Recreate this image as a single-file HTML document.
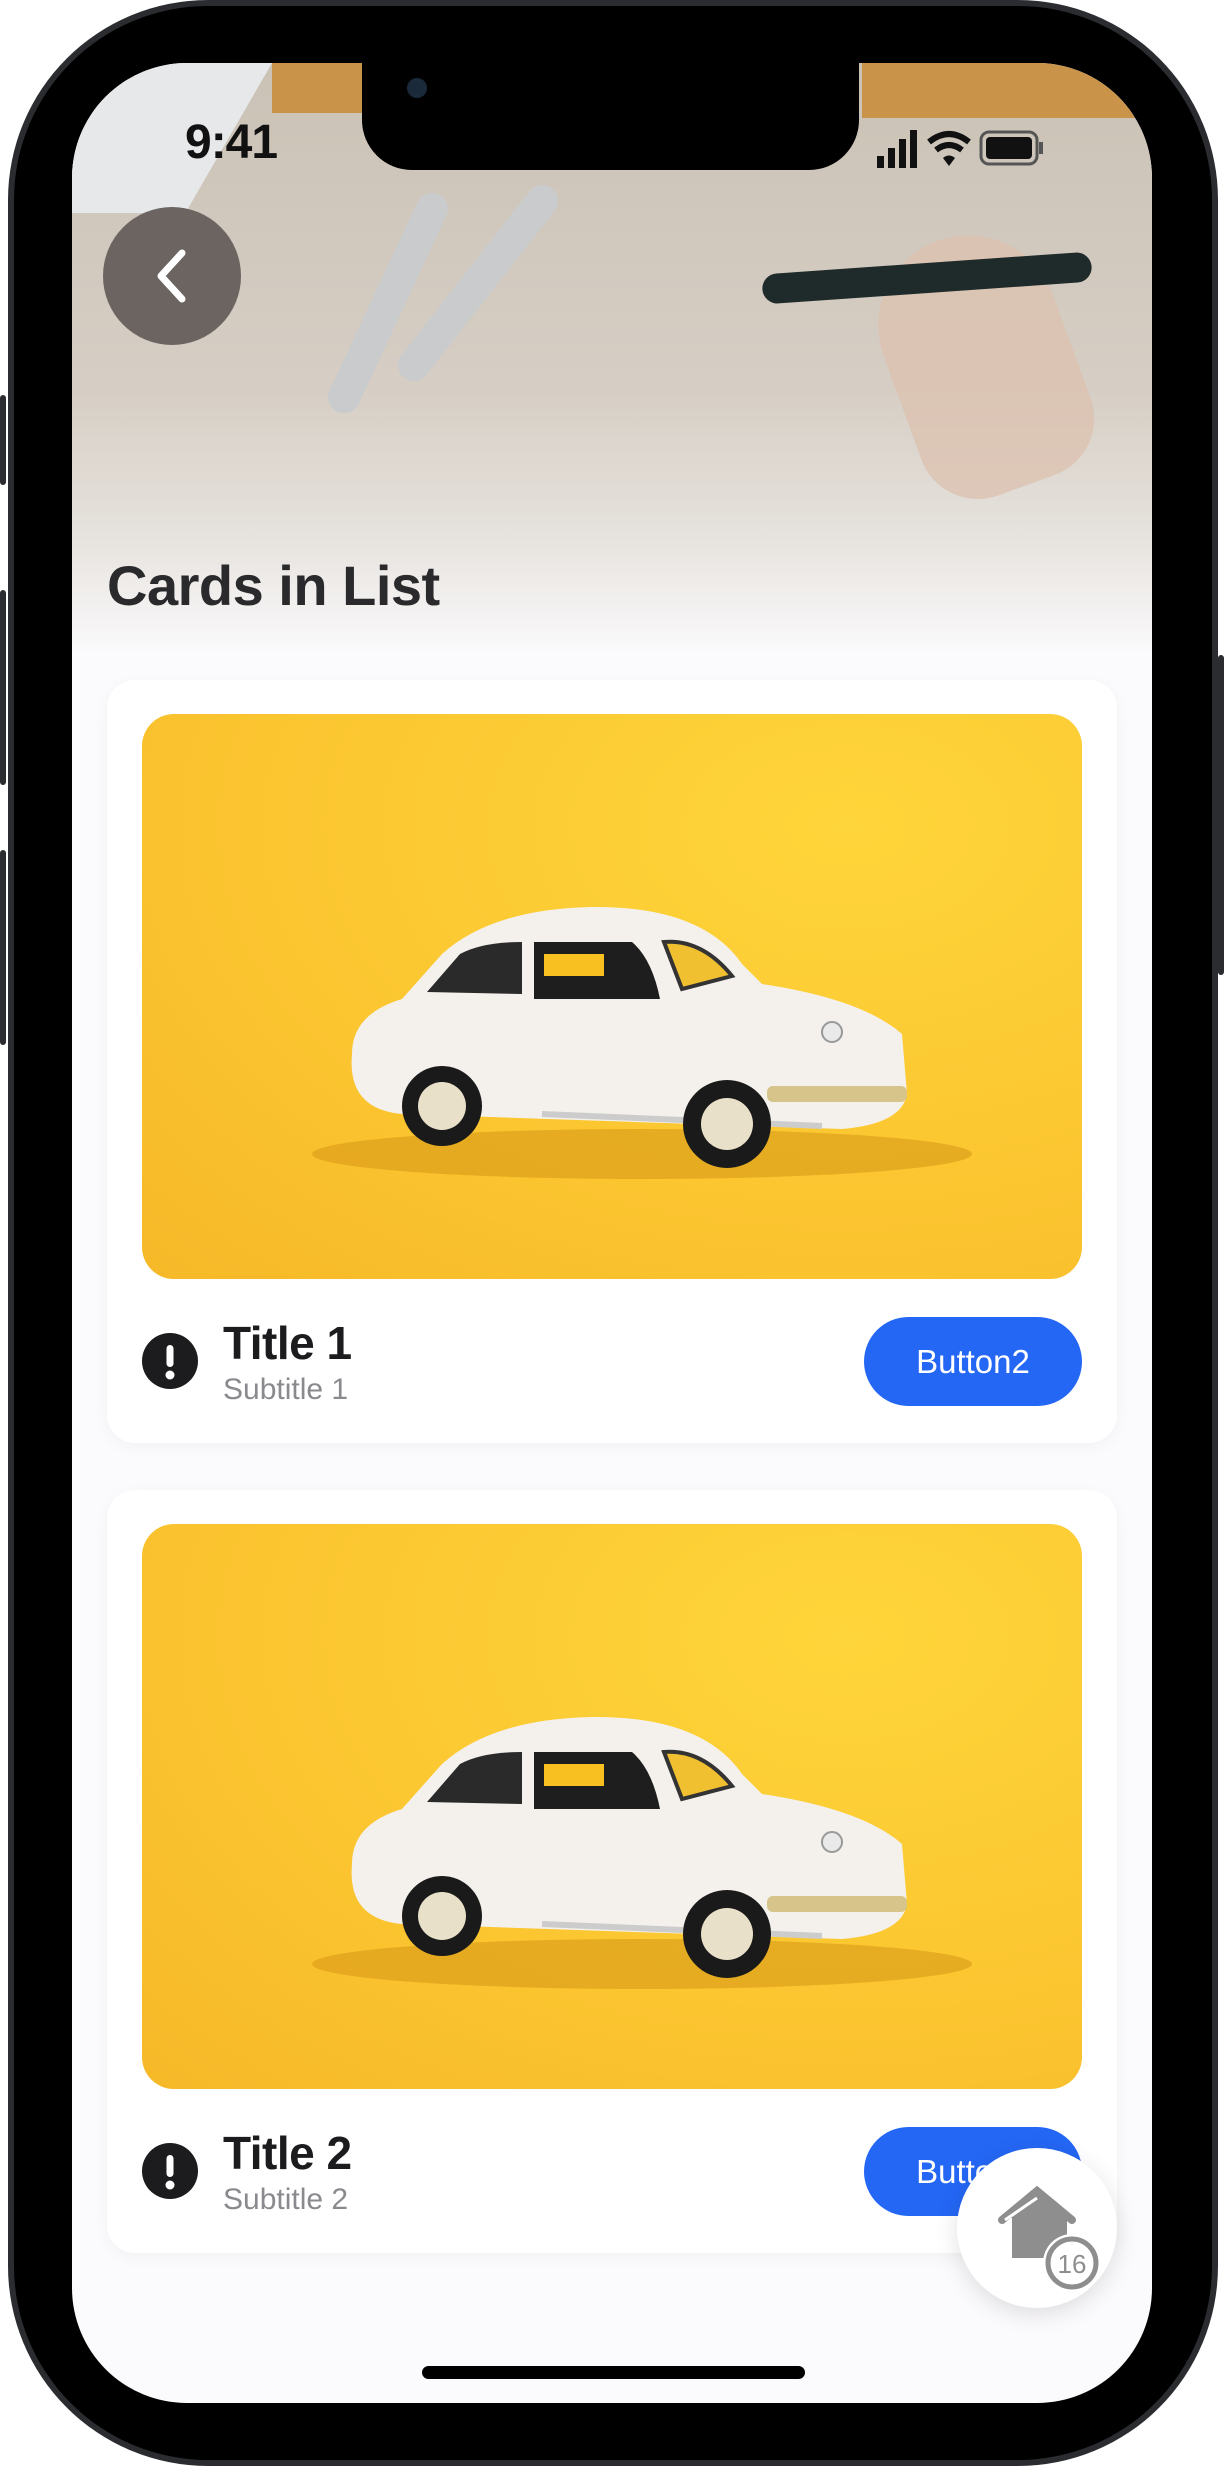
<!DOCTYPE html>
<html><head><meta charset="utf-8"><style>
*{margin:0;padding:0;box-sizing:border-box}
body{width:1224px;height:2466px;background:#fff;position:relative;overflow:hidden;font-family:"Liberation Sans",sans-serif}
.abs{position:absolute}
.frame{left:8px;top:0;width:1210px;height:2466px;border-radius:200px;background:#2a2c30;}
.frame2{left:14px;top:6px;width:1198px;height:2454px;border-radius:194px;background:#000;}
.screen{left:72px;top:63px;width:1080px;height:2340px;border-radius:115px;background:#fbfafc;overflow:hidden}
.hdr{left:0;top:0;width:1080px;height:590px;background:linear-gradient(180deg,#cbc2b6 0%,#d6cec4 55%,#e6e2dd 80%,#fbfafc 100%)}
.card{left:35px;width:1010px;height:763px;background:#fff;border-radius:28px;box-shadow:0 4px 16px rgba(0,0,0,0.04)}
.img{left:35px;top:34px;width:940px;height:565px;border-radius:32px;overflow:hidden;background:radial-gradient(ellipse at 75% 20%,#fed53a,#fbc530 60%,#f6b828)}
.ic{left:35px;top:653px;width:56px;height:56px;border-radius:50%;background:#1c1c1e}
.t{left:116px;top:636px;font-size:46px;font-weight:bold;color:#1c1c1e;letter-spacing:-0.5px;line-height:54px}
.s{left:116px;top:693px;font-size:30px;color:#8a8a8e;line-height:34px}
.btn{left:757px;top:637px;width:218px;height:89px;border-radius:45px;background:#2467f5;color:#fff;font-size:33px;text-align:center;line-height:89px}
</style></head><body>
<div class="abs frame"></div>
<div class="abs frame2"></div>
<div class="abs" style="left:0;top:395px;width:6px;height:90px;background:#2a2c30;border-radius:3px"></div>
<div class="abs" style="left:0;top:590px;width:6px;height:195px;background:#2a2c30;border-radius:3px"></div>
<div class="abs" style="left:0;top:850px;width:6px;height:195px;background:#2a2c30;border-radius:3px"></div>
<div class="abs" style="left:1218px;top:655px;width:6px;height:320px;background:#2a2c30;border-radius:3px"></div>
<div class="abs screen">
  <div class="abs hdr">
    <div class="abs" style="left:0;top:0;width:200px;height:150px;background:#e6e8ea;transform:skewX(-30deg);transform-origin:top left"></div>
    <div class="abs" style="left:200px;top:0;width:90px;height:50px;background:#c9944a"></div>
    <div class="abs" style="left:790px;top:0;width:290px;height:55px;background:#c9944a"></div>
    <div class="abs" style="left:300px;top:120px;width:32px;height:240px;background:#c9cbcd;border-radius:16px;transform:rotate(25deg)"></div>
    <div class="abs" style="left:390px;top:100px;width:32px;height:240px;background:#c9cbcd;border-radius:16px;transform:rotate(38deg)"></div>
    <div class="abs" style="left:820px;top:170px;width:180px;height:260px;background:#dcc2b0;border-radius:90px 90px 60px 60px;transform:rotate(-20deg);opacity:.8"></div>
    <div class="abs" style="left:690px;top:200px;width:330px;height:30px;background:#1f2a2a;border-radius:15px;transform:rotate(-4deg)"></div>
  </div>
  <div class="abs" style="left:31px;top:144px;width:138px;height:138px;border-radius:50%;background:#6b6460"></div>
  <svg class="abs" style="left:31px;top:144px" width="138" height="138"><path d="M79 46 L58 69 L79 92" stroke="#fff" stroke-width="7" fill="none" stroke-linecap="round" stroke-linejoin="round"/></svg>
  <div class="abs" style="left:290px;top:0;width:497px;height:107px;background:#000;border-radius:0 0 50px 50px"></div>
  <div class="abs" style="left:335px;top:15px;width:20px;height:20px;border-radius:50%;background:#1a2a3a"></div>
  <div class="abs" style="left:113px;top:52px;font-size:48px;font-weight:bold;color:#111;letter-spacing:-1px">9:41</div>
  <svg class="abs" style="left:805px;top:65px" width="200" height="50">
    <rect x="0" y="28" width="7" height="12" fill="#111"/><rect x="11" y="20" width="7" height="20" fill="#111"/><rect x="22" y="11" width="7" height="29" fill="#111"/><rect x="33" y="2" width="7" height="38" fill="#111"/>
    <path d="M52 14 Q72 -2 92 14" stroke="#111" stroke-width="6" fill="none"/><path d="M59 22 Q72 12 85 22" stroke="#111" stroke-width="6" fill="none"/><path d="M66 30 L72 38 L78 30 Q72 25 66 30Z" fill="#111"/>
    <rect x="104" y="4" width="56" height="32" rx="8" fill="none" stroke="#555" stroke-width="3"/><rect x="109" y="9" width="46" height="22" rx="4" fill="#111"/><rect x="162" y="14" width="4" height="12" fill="#555"/>
  </svg>
  <div class="abs" style="left:35px;top:490px;font-size:56px;font-weight:bold;color:#2a2a2c;letter-spacing:-0.5px">Cards in List</div>

  <div class="abs card" style="top:617px">
    <div class="abs img"><svg width="940" height="565" viewBox="0 0 940 565">
      <ellipse cx="500" cy="440" rx="330" ry="25" fill="#d99a18" opacity=".6"/>
      <path d="M210 340 Q210 300 260 285 L300 240 Q350 195 450 193 Q560 192 600 250 L620 270 Q720 285 760 320 L765 380 Q760 410 700 415 L260 400 Q205 395 210 340Z" fill="#f4f1ec"/>
      <path d="M285 278 L318 240 Q340 228 380 228 L380 280Z" fill="#2a2a2a"/>
      <path d="M392 228 L490 228 Q510 245 518 285 L392 285Z" fill="#1e1e1e"/>
      <rect x="402" y="240" width="60" height="22" fill="#f8c020"/>
      <path d="M522 228 Q560 225 590 262 L540 275Z" fill="#f0c030" stroke="#333" stroke-width="4"/>
      <path d="M400 400 L680 412" stroke="#ccc" stroke-width="6"/>
      <rect x="625" y="372" width="140" height="16" rx="6" fill="#d6c48a"/>
      <circle cx="300" cy="392" r="40" fill="#1a1a1a"/><circle cx="300" cy="392" r="24" fill="#e8e0c8"/>
      <circle cx="585" cy="410" r="44" fill="#1a1a1a"/><circle cx="585" cy="410" r="26" fill="#e8e0c8"/>
      <circle cx="690" cy="318" r="10" fill="#e9e9e9" stroke="#999" stroke-width="2"/>
    </svg></div>
    <div class="abs ic"><svg width="56" height="56"><rect x="24.5" y="12" width="7" height="22" rx="3.5" fill="#fff"/><circle cx="28" cy="42" r="4.5" fill="#fff"/></svg></div>
    <div class="abs t">Title 1</div>
    <div class="abs s">Subtitle 1</div>
    <div class="abs btn">Button2</div>
  </div>

  <div class="abs card" style="top:1427px">
    <div class="abs img"><svg width="940" height="565" viewBox="0 0 940 565">
      <ellipse cx="500" cy="440" rx="330" ry="25" fill="#d99a18" opacity=".6"/>
      <path d="M210 340 Q210 300 260 285 L300 240 Q350 195 450 193 Q560 192 600 250 L620 270 Q720 285 760 320 L765 380 Q760 410 700 415 L260 400 Q205 395 210 340Z" fill="#f4f1ec"/>
      <path d="M285 278 L318 240 Q340 228 380 228 L380 280Z" fill="#2a2a2a"/>
      <path d="M392 228 L490 228 Q510 245 518 285 L392 285Z" fill="#1e1e1e"/>
      <rect x="402" y="240" width="60" height="22" fill="#f8c020"/>
      <path d="M522 228 Q560 225 590 262 L540 275Z" fill="#f0c030" stroke="#333" stroke-width="4"/>
      <path d="M400 400 L680 412" stroke="#ccc" stroke-width="6"/>
      <rect x="625" y="372" width="140" height="16" rx="6" fill="#d6c48a"/>
      <circle cx="300" cy="392" r="40" fill="#1a1a1a"/><circle cx="300" cy="392" r="24" fill="#e8e0c8"/>
      <circle cx="585" cy="410" r="44" fill="#1a1a1a"/><circle cx="585" cy="410" r="26" fill="#e8e0c8"/>
      <circle cx="690" cy="318" r="10" fill="#e9e9e9" stroke="#999" stroke-width="2"/>
    </svg></div>
    <div class="abs ic"><svg width="56" height="56"><rect x="24.5" y="12" width="7" height="22" rx="3.5" fill="#fff"/><circle cx="28" cy="42" r="4.5" fill="#fff"/></svg></div>
    <div class="abs t">Title 2</div>
    <div class="abs s">Subtitle 2</div>
    <div class="abs btn">Button2</div>
  </div>

  <div class="abs" style="left:885px;top:2085px;width:160px;height:160px;border-radius:50%;background:#fff;box-shadow:0 6px 24px rgba(0,0,0,0.12)"></div>
  <svg class="abs" style="left:885px;top:2085px" width="160" height="160">
    <path d="M50 70 L80 45 L110 70 L110 110 L55 110 L55 70Z" fill="#8e8e8e"/>
    <path d="M45 72 L80 43 L115 72" stroke="#8e8e8e" stroke-width="8" fill="none" stroke-linecap="round"/>
    <path d="M48 72 L80 50" stroke="#fff" stroke-width="3" fill="none"/>
    <circle cx="115" cy="115" r="29" fill="#fff"/>
    <circle cx="115" cy="115" r="24" fill="#fff" stroke="#8e8e8e" stroke-width="5"/>
    <text x="115" y="125" font-size="26" fill="#8e8e8e" text-anchor="middle" font-family="Liberation Sans">16</text>
  </svg>
  <div class="abs" style="left:350px;top:2303px;width:383px;height:13px;border-radius:7px;background:#000"></div>
</div>
</body></html>
